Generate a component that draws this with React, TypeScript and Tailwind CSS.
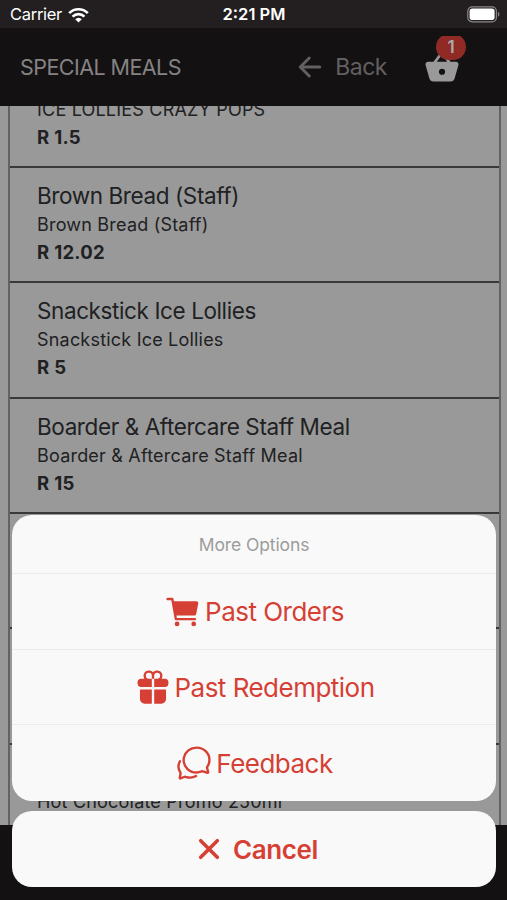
import { IoArrowBack, IoBasket, IoCart, IoChatbubblesOutline, IoClose, IoGift } from "react-icons/io5";

const meals = [
  { title: "", description: "ICE LOLLIES CRAZY POPS", price: "R 1.5" },
  { title: "Brown Bread (Staff)", description: "Brown Bread (Staff)", price: "R 12.02" },
  { title: "Snackstick Ice Lollies", description: "Snackstick Ice Lollies", price: "R 5" },
  {
    title: "Boarder & Aftercare Staff Meal",
    description: "Boarder & Aftercare Staff Meal",
    price: "R 15",
  },
  { title: "", description: "", price: "" },
  { title: "", description: "", price: "" },
  { title: "", description: "Hot Chocolate Promo 250ml", price: "" },
];

const options = [
  { label: "Past Orders", icon: IoCart },
  { label: "Past Redemption", icon: IoGift },
  { label: "Feedback", icon: IoChatbubblesOutline },
];

function StatusBar() {
  return (
    <div className="grid h-7 shrink-0 grid-cols-3 items-center bg-[#231f20] pr-[7px] pl-[10px] text-white">
      <div className="flex items-center gap-[6px] pt-px text-[16.5px]">
        <span className="tracking-[-0.3px]">Carrier</span>
        <svg width="21" height="16" viewBox="0 0 21 16" fill="none" stroke="white" strokeWidth="2.7">
          <path d="M1.2 6.1a13.2 13.2 0 0 1 18.6 0" />
          <path d="M4.6 9.6a8.4 8.4 0 0 1 11.8 0" />
          <path d="M10.5 15.6 7.2 12.2a4.8 4.8 0 0 1 6.6 0z" fill="white" stroke="none" />
        </svg>
      </div>
      <span className="pt-px pr-[2px] text-center text-[16.5px] font-semibold">2:21 PM</span>
      <svg className="ml-auto" width="33" height="17" viewBox="0 0 33 17" fill="none">
        <rect x="0.8" y="0.8" width="28.6" height="15" rx="4.4" stroke="#8b8888" strokeWidth="1.2" />
        <rect x="2.6" y="2.6" width="25" height="11.4" rx="2.8" fill="white" />
        <path d="M31 5.8c1.8.7 1.8 4.3 0 5z" fill="#8b8888" />
      </svg>
    </div>
  );
}

function Header() {
  return (
    <header className="flex h-[78px] shrink-0 items-center bg-[#141112] pr-11 pl-5">
      <h1 className="pt-px text-[21.5px] tracking-[-0.55px] text-[#858384]">SPECIAL MEALS</h1>
      <button className="ml-auto flex items-center gap-[9px] text-[#626061]">
        <IoArrowBack size={32} />
        <span className="text-[23px] tracking-[-0.5px]">Back</span>
      </button>
      <div className="relative ml-[34px]">
        <IoBasket size={42} className="text-[#999]" />
        <span className="absolute -top-[12px] left-[15px] flex h-[26px] w-[30px] items-center justify-center rounded-full bg-[#8f2b24] pt-px text-[17px] font-semibold text-[#aaa] [clip-path:inset(2px_0_0_0)]">
          1
        </span>
      </div>
    </header>
  );
}

function ActionSheet() {
  return (
    <div className="absolute right-[11px] bottom-[13px] left-3 flex flex-col gap-[10px] text-[#d63f34]">
      <div className="divide-y divide-[#ececec] overflow-hidden rounded-[20px] bg-[#f9f9f9]">
        <p className="flex h-[59px] items-center justify-center pt-[2px] text-[17.5px] tracking-[-0.1px] text-[#9c9c9c]">
          More Options
        </p>
        {options.map(({ label, icon: Icon }) => (
          <button key={label} className="flex h-[75.6px] w-full items-center justify-center gap-[3px]">
            <Icon size={38} />
            <span className="text-[26px] tracking-[-0.52px]">{label}</span>
          </button>
        ))}
      </div>
      <button className="flex h-[76px] items-center justify-center gap-[5px] rounded-[20px] bg-[#f9f9f9]">
        <IoClose size={38} />
        <span className="text-[26px] font-semibold tracking-[-0.4px]">Cancel</span>
      </button>
    </div>
  );
}

export default function App() {
  return (
    <div className="relative flex h-[900px] w-[507px] flex-col overflow-hidden bg-[#999] font-['Inter',sans-serif]">
      <StatusBar />
      <Header />
      <main className="min-h-0 flex-1 overflow-hidden pr-[6px] pl-2">
        <div className="-mt-[53.5px] h-[900px] border-x-2 border-[#626262]">
          {meals.map((meal, index) => (
            <div
              key={index}
              className="h-[115.4px] border-b-2 border-[#393939] pt-[13px] pl-[27px] text-[#202122]">
              <p className="h-[30px] text-[22.5px] leading-[30px] tracking-[-0.4px]">{meal.title}</p>
              <p className="h-[27px] text-[18px] leading-7 tracking-[0.2px]">{meal.description}</p>
              <p className="h-7 text-[18.5px] leading-7 font-bold tracking-[0.3px]">{meal.price}</p>
            </div>
          ))}
        </div>
      </main>
      <footer className="h-[75px] shrink-0 bg-[#141112]" />
      <ActionSheet />
    </div>
  );
}
